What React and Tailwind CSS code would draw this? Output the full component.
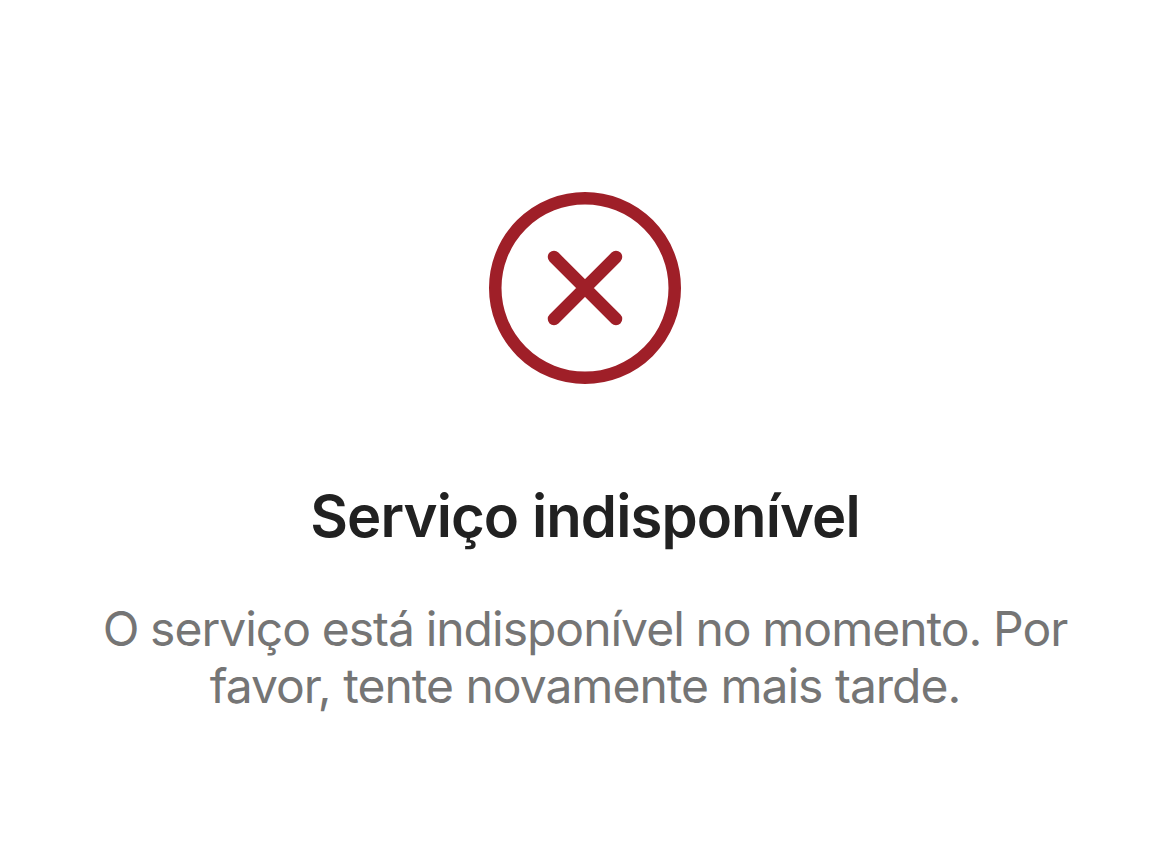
function ErrorIcon() {
  return (
    <svg
      viewBox="0 0 192 192"
      className="w-48 h-48 text-[#9f1f28]"
      fill="none"
      stroke="currentColor"
      strokeWidth="12.5"
      strokeLinecap="round"
    >
      <circle cx="96" cy="96" r="89.75" />
      <path d="M65 65l62 62M127 65l-62 62" />
    </svg>
  );
}

export default function App() {
  return (
    <div className="min-h-screen bg-white flex flex-col items-center pt-48 font-['Inter',sans-serif] text-center">
      <ErrorIcon />
      <h1 className="mt-24 text-[58px] leading-[72px] font-semibold tracking-[-0.9px] text-[#212121] whitespace-nowrap">
        Serviço indisponível
      </h1>
      <p className="mt-12 text-[48px] leading-[57px] text-[#757575] tracking-[-1px]">
        <span className="block whitespace-nowrap [word-spacing:-0.8px]">O serviço está indisponível no momento. Por</span>
        <span className="block whitespace-nowrap">favor, tente novamente mais tarde.</span>
      </p>
    </div>
  );
}
